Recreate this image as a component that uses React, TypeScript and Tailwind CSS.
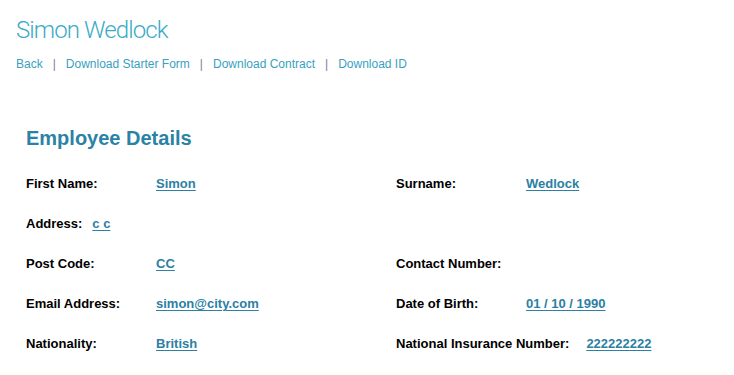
import React from "react";

const Field = ({ label, value, labelW = "w-[130px]", gap = "" }: { label: string; value?: string; labelW?: string; gap?: string }) => (
  <div className="flex items-baseline h-[40px]">
    <span className={`${labelW} ${gap} shrink-0 font-bold text-[13px] leading-[16px] text-black`}>{label}</span>
    {value && <a href="#" className="font-bold text-[13px] leading-[16px] text-[#2b80a3] underline underline-offset-[2px]">{value}</a>}
  </div>
);

export default function App() {
  return (
    <div className="w-[734px] h-[375px] bg-white overflow-hidden" style={{ fontFamily: '"Liberation Sans", Arial, sans-serif' }}>
      <div className="pl-[16px] pt-[15px]">
        <h1 className="text-[24px] leading-[30px] font-light text-[#3aabc6] tracking-[-0.9px]" style={{ fontFamily: 'Roboto, sans-serif' }}>Simon Wedlock</h1>
        <nav className="mt-[12px] flex items-center text-[12px] leading-[14px] text-[#3a9fc0]">
          <a href="#">Back</a>
          <span className="mx-[10px] text-[#7a7c9c]">|</span>
          <a href="#">Download Starter Form</a>
          <span className="mx-[10px] text-[#7a7c9c]">|</span>
          <a href="#">Download Contract</a>
          <span className="mx-[10px] text-[#7a7c9c]">|</span>
          <a href="#">Download ID</a>
        </nav>
      </div>
      <div className="pl-[26px] pt-[55px]">
        <h2 className="text-[20px] leading-[24px] font-bold text-[#2a83a4]">Employee Details</h2>
        <div className="mt-[26px] grid grid-cols-[370px_1fr]">
          <Field label="First Name:" value="Simon" />
          <Field label="Surname:" value="Wedlock" />
          <Field label="Address:" value="c c" labelW="" gap="mr-[10px]" />
          <div />
          <Field label="Post Code:" value="CC" />
          <Field label="Contact Number:" />
          <Field label="Email Address:" value="simon@city.com" />
          <Field label="Date of Birth:" value="01 / 10 / 1990" />
          <Field label="Nationality:" value="British" />
          <Field label="National Insurance Number:" value="222222222" labelW="" gap="mr-[17px]" />
        </div>
      </div>
    </div>
  );
}
